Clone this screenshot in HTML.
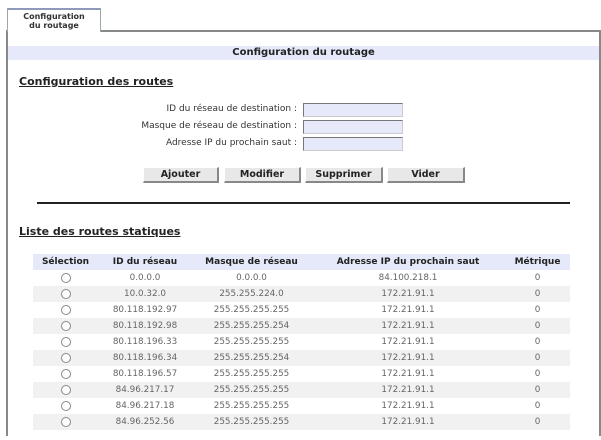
<!DOCTYPE html>
<html><head><meta charset="utf-8"><style>
*{margin:0;padding:0;box-sizing:border-box}
body{width:601px;height:440px;background:#fff;font-family:"DejaVu Sans",Verdana,sans-serif;font-size:9px;color:#333;position:relative;overflow:hidden}
.a{position:absolute}
.tab{left:7px;top:8px;width:94px;height:24px;border:1px solid #9aa;border-bottom:none;border-top:2px solid #8f9ab8;background:#fff;text-align:center;font-weight:bold;font-size:8px;line-height:9px;padding-top:2px;color:#333;z-index:2}
.box{left:6px;top:30px;width:595px;height:406px;border:2px solid #888;border-bottom:none}
.bar{left:8px;top:46px;width:591px;height:14px;background:#e6e9fa;text-align:center;font-weight:bold;font-size:10px;line-height:14px;color:#222}
.h{left:19px;font-weight:bold;font-size:11px;text-decoration:underline;color:#222}
.lbl{width:297px;text-align:right;font-size:9px;color:#333}
.inp{left:303px;width:100px;height:14px;background:#e6e9fa;border:1px solid #777;border-right-color:#ccc;border-bottom-color:#ccc}
.btn{top:167px;height:16px;background:#e8e8e8;border:1px solid #fff;border-right:2px solid #888;border-bottom:2px solid #888;text-align:center;font-weight:bold;font-size:9.5px;line-height:13px;color:#222}
table{position:absolute;left:33px;top:254px;width:537px;border-collapse:collapse}
td,th{text-align:center;height:16px;padding:0;font-size:8.8px}
th{background:#e6e9fa;font-weight:bold;color:#222;height:16px;font-size:9px}
td{color:#666}
tr:nth-child(odd) td{background:#f1f1f1}
.r{display:inline-block;width:10px;height:10px;border:1px solid #888;border-radius:50%;vertical-align:middle;background:#fff}
</style></head><body>
<div class="a tab">Configuration<br>du routage</div>
<div class="a box"></div>
<div class="a bar">Configuration du routage</div>
<div class="a h" style="top:75px">Configuration des routes</div>
<div class="a lbl" style="top:104px">ID du réseau de destination :</div>
<div class="a lbl" style="top:121px">Masque de réseau de destination :</div>
<div class="a lbl" style="top:138px">Adresse IP du prochain saut :</div>
<div class="a inp" style="top:103px"></div>
<div class="a inp" style="top:120px"></div>
<div class="a inp" style="top:137px"></div>
<div class="a btn" style="left:143px;width:76px">Ajouter</div>
<div class="a btn" style="left:224px;width:77px">Modifier</div>
<div class="a btn" style="left:305px;width:78px">Supprimer</div>
<div class="a btn" style="left:387px;width:78px">Vider</div>
<div class="a" style="left:37px;top:202px;width:533px;height:2px;background:#222"></div>
<div class="a h" style="top:225px">Liste des routes statiques</div>
<table>
<tr><th style="width:65px">Sélection</th><th style="width:94px">ID du réseau</th><th style="width:119px">Masque de réseau</th><th style="width:194px">Adresse IP du prochain saut</th><th>Métrique</th></tr>
<tr><td><span class="r"></span></td><td>0.0.0.0</td><td>0.0.0.0</td><td>84.100.218.1</td><td>0</td></tr>
<tr><td><span class="r"></span></td><td>10.0.32.0</td><td>255.255.224.0</td><td>172.21.91.1</td><td>0</td></tr>
<tr><td><span class="r"></span></td><td>80.118.192.97</td><td>255.255.255.255</td><td>172.21.91.1</td><td>0</td></tr>
<tr><td><span class="r"></span></td><td>80.118.192.98</td><td>255.255.255.254</td><td>172.21.91.1</td><td>0</td></tr>
<tr><td><span class="r"></span></td><td>80.118.196.33</td><td>255.255.255.255</td><td>172.21.91.1</td><td>0</td></tr>
<tr><td><span class="r"></span></td><td>80.118.196.34</td><td>255.255.255.254</td><td>172.21.91.1</td><td>0</td></tr>
<tr><td><span class="r"></span></td><td>80.118.196.57</td><td>255.255.255.255</td><td>172.21.91.1</td><td>0</td></tr>
<tr><td><span class="r"></span></td><td>84.96.217.17</td><td>255.255.255.255</td><td>172.21.91.1</td><td>0</td></tr>
<tr><td><span class="r"></span></td><td>84.96.217.18</td><td>255.255.255.255</td><td>172.21.91.1</td><td>0</td></tr>
<tr><td><span class="r"></span></td><td>84.96.252.56</td><td>255.255.255.255</td><td>172.21.91.1</td><td>0</td></tr>
</table>
</body></html>
